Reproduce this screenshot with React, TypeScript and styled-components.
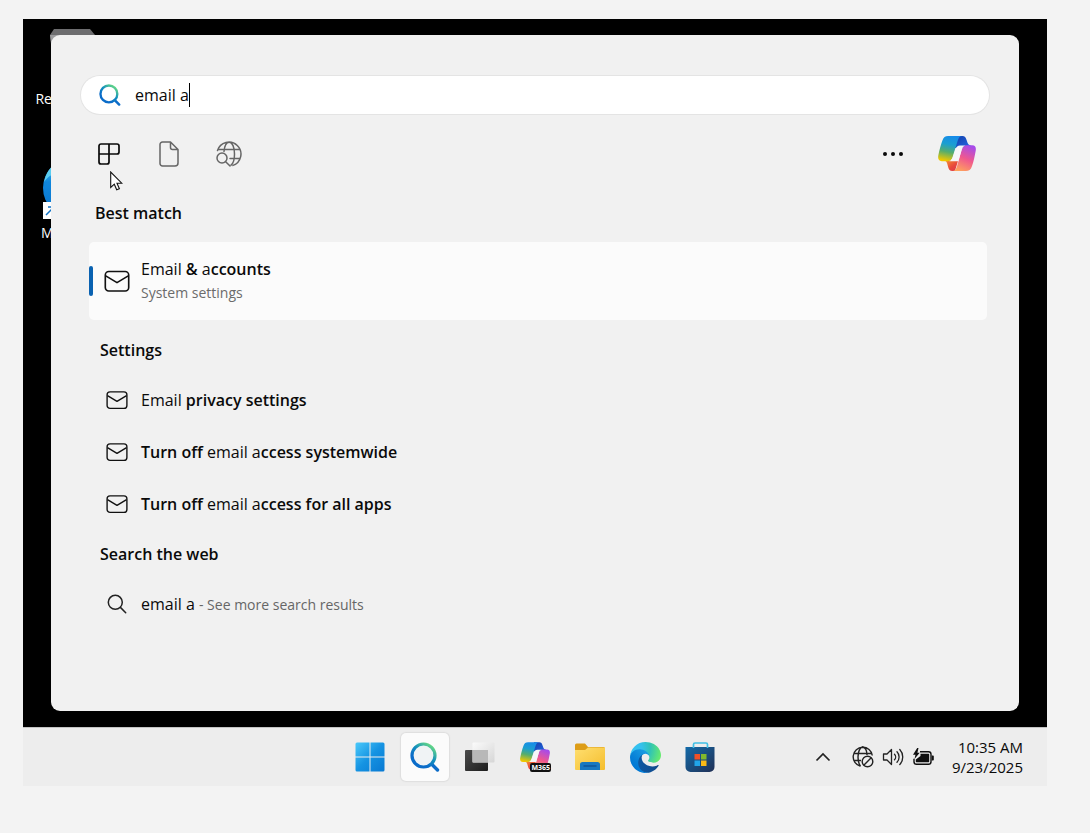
import React, { useState } from "react";
import styled, { createGlobalStyle } from "styled-components";

const GlobalStyle = createGlobalStyle`
  *, *::before, *::after { box-sizing: border-box; }
  body {
    margin: 0;
    background: #f3f3f3;
    color: #0a0a0a;
    font-family: "Open Sans", "Noto Sans", sans-serif;
    font-size: 16px;
    line-height: 24px;
  }
  button, input { font: inherit; color: inherit; }
  svg { display: block; flex: none; }
`;

const Screen = styled.div`
  margin: 19px 43px 47px 23px;
`;

const Desktop = styled.main`
  position: relative;
  overflow: hidden;
  padding: 16px 28px;
  background: #000;
`;

const Shortcut = styled.div<{ $top: number }>`
  position: absolute;
  left: 9px;
  top: ${(p) => p.$top}px;
  width: 80px;
  display: flex;
  flex-direction: column;
  align-items: center;
  gap: 4px;
  color: #fff;
  font-size: 14px;
  line-height: 20px;
  white-space: nowrap;
`;

const Panel = styled.section`
  position: relative;
  padding: 41px 30px 81px;
  border-radius: 9px;
  background: #f1f1f1;
`;

const SearchBox = styled.label`
  display: flex;
  align-items: center;
  height: 38px;
  padding-left: 18px;
  border-radius: 19px;
  background: #fff;
  box-shadow: 0 0 0 1px #e4e4e4;
  cursor: text;
`;

const SearchInput = styled.input`
  field-sizing: content;
  margin-left: 14px;
  padding: 0;
  border: 0;
  outline: 0;
  background: transparent;
  caret-color: transparent;
`;

const Caret = styled.span`
  width: 1px;
  height: 24px;
  background: #000;
`;

const Toolbar = styled.div`
  display: flex;
  align-items: center;
  height: 79px;
  padding: 0 12px 0 8px;
`;

const ToolButton = styled.button<{ $active?: boolean; $after?: number }>`
  display: grid;
  place-items: center;
  width: 40px;
  height: 40px;
  margin-right: ${(p) => p.$after ?? 20}px;
  padding: 0;
  border: 0;
  background: transparent;
  color: ${(p) => (p.$active ? "#0a0a0a" : "#666")};
`;

const Spacer = styled.div`
  flex: 1;
`;

const Heading = styled.h2<{ $inset: number; $before: number; $after: number }>`
  margin: ${(p) => p.$before}px 0 ${(p) => p.$after}px ${(p) => p.$inset}px;
  font-size: 16px;
  line-height: 24px;
  font-weight: 600;
`;

const BestMatch = styled.button`
  position: relative;
  display: flex;
  align-items: center;
  gap: 11px;
  width: calc(100% - 10px);
  height: 78px;
  margin-left: 8px;
  padding: 0 15px;
  border: 0;
  border-radius: 5px;
  background: #fbfbfb;
  text-align: left;

  &::before {
    content: "";
    position: absolute;
    left: 0;
    top: 24px;
    bottom: 24px;
    width: 4px;
    border-radius: 2px;
    background: #0a62b1;
  }
`;

const Subtitle = styled.div`
  color: #6b6b6b;
  font-size: 14px;
`;

const ResultList = styled.ul`
  margin: 0;
  padding: 0;
  list-style: none;
`;

const ResultRow = styled.button`
  display: flex;
  align-items: center;
  gap: 13px;
  width: 100%;
  height: 52px;
  padding: 0 25px;
  border: 0;
  background: transparent;
  text-align: left;

  small {
    color: #666;
    font-size: 14px;
  }
`;

const Completion = styled.b`
  font-weight: 600;
`;

const Pointer = styled.svg`
  position: absolute;
  left: 59px;
  top: 136px;
`;

const Taskbar = styled.footer`
  display: grid;
  grid-template-columns: 1fr auto 1fr;
  align-items: center;
  height: 59px;
  border-top: 1px solid #c4c4c4;
  background: #ededed;
`;

const Apps = styled.nav`
  grid-column: 2;
  display: flex;
  gap: 7px;
`;

const AppButton = styled.button<{ $active?: boolean }>`
  display: grid;
  place-items: center;
  width: 48px;
  height: 48px;
  padding: 0;
  border: 0;
  border-radius: 5px;
  background: ${(p) => (p.$active ? "#fbfbfb" : "transparent")};
  box-shadow: ${(p) => (p.$active ? "0 0 1px 1px #dedede" : "none")};
`;

const Tray = styled.div`
  display: flex;
  align-items: center;
  justify-content: flex-end;
  padding-right: 24px;
`;

const TrayButton = styled.button<{ $after?: number }>`
  display: grid;
  place-items: center;
  width: 24px;
  height: 32px;
  margin-right: ${(p) => p.$after ?? 6}px;
  padding: 0;
  border: 0;
  background: transparent;
`;

const Clock = styled.time`
  font-size: 15px;
  line-height: 20px;
  text-align: right;
`;

const MailIcon = ({ size }: { size: number }) => (
  <svg width={size} height={size} viewBox="0 0 24 24" fill="none" stroke="#111" strokeWidth="1.5" strokeLinejoin="round">
    <rect x="1.2" y="3.2" width="21.6" height="18" rx="3.2" />
    <path d="M1.6 7.300 12 13.500 22.4 7.300" />
  </svg>
);

const SearchGlyph = ({ size, id, fill = "none" }: { size: number; id: string; fill?: string }) => (
  <svg width={size} height={size} viewBox="0 0 30 30" fill="none">
    <defs>
      <linearGradient id={id} x1="5" y1="26" x2="22" y2="3" gradientUnits="userSpaceOnUse">
        <stop offset="0.3" stopColor="#0a6cc9" />
        <stop offset="0.6" stopColor="#138fbd" />
        <stop offset="1" stopColor="#69dc83" />
      </linearGradient>
    </defs>
    <path d="m21.5 22 6 6" stroke="#0c6cc8" strokeWidth="3.4" strokeLinecap="round" />
    <circle cx="13.5" cy="13.5" r="11.5" fill={fill} stroke={`url(#${id})`} strokeWidth="3.2" />
  </svg>
);

const AppsIcon = () => (
  <svg width="22" height="22" viewBox="0 0 22 22" fill="none" stroke="currentColor" strokeWidth="1.7" strokeLinejoin="round">
    <path d="M3 1h16a2 2 0 0 1 2 2v6a2 2 0 0 1-2 2h-8v8a2 2 0 0 1-2 2H3a2 2 0 0 1-2-2V3a2 2 0 0 1 2-2ZM1 11h10V1" />
  </svg>
);

const DocumentIcon = () => (
  <svg width="20" height="26" viewBox="0 0 20 26" fill="none" stroke="currentColor" strokeWidth="1.5" strokeLinejoin="round">
    <path d="M3.5 1h8L19 8.500V22a3 3 0 0 1-3 3H3.500a2.500 2.500 0 0 1-2.500-2.500v-19A2.500 2.500 0 0 1 3.500 1ZM11.500 1v5.500a2 2 0 0 0 2 2H19" />
  </svg>
);

const WebIcon = () => (
  <svg width="26" height="26" viewBox="0 0 26 26" fill="none" stroke="currentColor" strokeWidth="1.5" strokeLinecap="round">
    <path d="M1.500 9.500A12 12 0 1 1 17 24.400M2.200 8.500h21.600M14 17.500h10M8 10.500C8.500 5 10.500 1.200 13.200 1.200c3.200 0 5.300 5.300 5.300 11.800 0 5.500-1.200 9.500-3.500 11.200" />
    <circle cx="6" cy="17" r="5" />
    <path d="m9.700 20.700 4.300 4.300" />
  </svg>
);

const Copilot = ({ id, width, height }: { id: string; width: number; height: number }) => (
  <svg width={width} height={height} viewBox="0 0 112 103">
    <defs>
      <linearGradient id={`${id}l`} x1="0.6" y1="0" x2="0.4" y2="1">
        <stop offset="0" stopColor="#168bea" />
        <stop offset="0.35" stopColor="#1b9fd0" />
        <stop offset="0.65" stopColor="#56ad6d" />
        <stop offset="1" stopColor="#f1c800" />
      </linearGradient>
      <linearGradient id={`${id}r`} x1="0.7" y1="0" x2="0.3" y2="1">
        <stop offset="0" stopColor="#a64bea" />
        <stop offset="0.5" stopColor="#f0588e" />
        <stop offset="1" stopColor="#ffa35c" />
      </linearGradient>
      <linearGradient id={`${id}t`} x1="0" y1="0" x2="1" y2="1">
        <stop offset="0" stopColor="#143fa8" />
        <stop offset="1" stopColor="#2368e6" />
      </linearGradient>
      <linearGradient id={`${id}b`} x1="0" y1="0" x2="1" y2="1">
        <stop offset="0" stopColor="#f6a033" />
        <stop offset="0.6" stopColor="#e8483c" />
        <stop offset="1" stopColor="#d93854" />
      </linearGradient>
    </defs>
    <path d="M52 0h20c7 0 10 4 12 11l3 9c2 5 4 7 9 7v8H50Z" fill={`url(#${id}t)`} />
    <path d="M60 70 50 103H42c-7 0-10-4-12-11l-3-11c-2-6-4-8-10-8Z" fill={`url(#${id}b)`} />
    <path d="M30 0h42c-8 0-11 5-14 14L43 62c-3 9-7 12-15 12H11C2 74-1 67 1 57 4 41 8 27 13 13 16 4 21 0 30 0Z" fill={`url(#${id}l)`} />
    <path d="M82 103H42c8 0 11-5 14-14l14-49c3-9 6-13 14-13h17c9 0 12 7 10 17-3 16-6 31-11 45-3 10-9 14-18 14Z" fill={`url(#${id}r)`} />
    <path d="M65 28H81c-6 1-9 6-11 12L60 74H33c6-2 9-6 11-12l8-24c2-6 6-10 13-10Z" fill="#f6f6f8" />
  </svg>
);

const EdgeLogo = ({ size, id }: { size: number; id: string }) => (
  <svg width={size} height={size} viewBox="0 0 256 256">
    <defs>
      <linearGradient id={`${id}a`} x1="63" y1="177" x2="241" y2="177" gradientUnits="userSpaceOnUse">
        <stop stopColor="#0c59a4" />
        <stop offset="1" stopColor="#114a8b" />
      </linearGradient>
      <linearGradient id={`${id}b`} x1="157" y1="100" x2="46" y2="221" gradientUnits="userSpaceOnUse">
        <stop stopColor="#1b9de2" />
        <stop offset="0.16" stopColor="#1595df" />
        <stop offset="0.67" stopColor="#0680d7" />
        <stop offset="1" stopColor="#0078d4" />
      </linearGradient>
      <radialGradient id={`${id}c`} cx="30" cy="55" r="235" gradientUnits="userSpaceOnUse">
        <stop stopColor="#35c1f1" />
        <stop offset="0.3" stopColor="#34c1ed" />
        <stop offset="0.6" stopColor="#2fc2b8" />
        <stop offset="1" stopColor="#66eb6e" />
      </radialGradient>
    </defs>
    <g transform="translate(-4.630 -4.920)">
      <path fill={`url(#${id}a)`} d="M235.680 195.460a93.730 93.730 0 0 1-10.540 4.710 101.870 101.870 0 0 1-35.900 6.460c-47.320 0-88.540-32.550-88.540-74.320A31.480 31.480 0 0 1 117.130 105c-42.800 1.800-53.800 46.400-53.800 72.530 0 73.880 68.090 81.370 82.760 81.370 7.910 0 19.840-2.300 27-4.560l1.310-.44a128.340 128.340 0 0 0 66.600-52.800 4 4 0 0 0-5.320-5.640Z" />
      <path fill={`url(#${id}b)`} d="M110.340 246.340A79.200 79.200 0 0 1 87.600 225a80.720 80.720 0 0 1 29.530-120c3.120-1.470 8.450-4.130 15.540-4a32.350 32.350 0 0 1 25.690 13 31.880 31.880 0 0 1 6.360 18.660c0-.21 24.460-79.600-80-79.600-43.900 0-80 41.660-80 78.210a130.150 130.150 0 0 0 12.110 56 128 128 0 0 0 156.380 67.110 75.550 75.550 0 0 1-62.780-8Z" />
      <path fill={`url(#${id}c)`} d="M156.940 153.780c-.81 1.050-3.300 2.500-3.300 5.660 0 2.610 1.700 5.120 4.720 7.230 14.380 10 41.490 8.680 41.560 8.680a59.560 59.560 0 0 0 30.270-8.350 61.380 61.380 0 0 0 30.430-52.880c.26-22.410-8-37.310-11.340-43.910C228.090 28.760 182.350 4.920 132.610 4.920a128 128 0 0 0-128 126.200c.48-36.540 36.800-66.050 80-66.050 3.500 0 23.460.34 42 10.070 16.340 8.580 24.900 18.940 30.850 29.210 6.180 10.670 7.280 24.150 7.280 29.520s-2.740 13.330-7.800 19.910Z" />
    </g>
  </svg>
);

const RecycleBin = () => (
  <svg width="60" height="56" viewBox="0 0 60 56">
    <path d="M8 6 12 0h36l5 6-5 46H13Z" fill="#6d6d6f" />
    <path d="M8 6h45l-2 14H10Z" fill="#9b9b9d" />
  </svg>
);

const EdgeShortcut = () => (
  <svg width="60" height="62" viewBox="0 0 60 62">
    <defs>
      <linearGradient id="disc" x1="0" y1="0" x2="0" y2="1">
        <stop offset="0.1" stopColor="#42c4ee" />
        <stop offset="0.4" stopColor="#1087dd" />
        <stop offset="1" stopColor="#0870c8" />
      </linearGradient>
    </defs>
    <circle cx="31" cy="31" r="30" fill="url(#disc)" />
    <path d="M2 25C4 16 8 10 14 6L10 18C7 19 4 22 2 25Z" fill="#5bcdf0" />
    <path d="M1 45h17v17H1Z" fill="#fff" />
    <path d="m4 58 8-8M6 50h6v6" fill="none" stroke="#1273c4" strokeWidth="1.500" />
  </svg>
);

const WindowsLogo = () => (
  <svg width="30" height="30" viewBox="0 0 30 30">
    <defs>
      <linearGradient id="win" x1="0" y1="0" x2="30" y2="30" gradientUnits="userSpaceOnUse">
        <stop stopColor="#4ccbfb" />
        <stop offset="0.5" stopColor="#1593e2" />
        <stop offset="1" stopColor="#0878d2" />
      </linearGradient>
    </defs>
    <path fill="url(#win)" d="M2 .5h12.500v14H.5V2A1.500 1.500 0 0 1 2 .5Zm13.500 0H28A1.500 1.500 0 0 1 29.500 2v12.500h-14ZM.5 15.500h14v14H2A1.500 1.500 0 0 1 .5 28Zm15 0h14V28a1.500 1.500 0 0 1-1.500 1.500H15.500Z" />
  </svg>
);

const TaskView = () => (
  <svg width="30" height="30" viewBox="0 0 30 30">
    <defs>
      <linearGradient id="tvd" x1="0" y1="0" x2="1" y2="1">
        <stop stopColor="#4c4c4c" />
        <stop offset="1" stopColor="#1c1c1c" />
      </linearGradient>
      <linearGradient id="tvl" x1="0" y1="0" x2="1" y2="1">
        <stop stopColor="#fbfbfb" />
        <stop offset="1" stopColor="#d6d6d6" />
      </linearGradient>
    </defs>
    <rect x="0" y="8" width="23" height="21" rx="1" fill="url(#tvd)" />
    <rect x="7.500" y="0.500" width="22" height="20" rx="1" fill="url(#tvl)" />
    <rect x="7.500" y="8" width="15.500" height="12.500" fill="#b8b8b8" />
  </svg>
);

const FolderIcon = () => (
  <svg width="32" height="28" viewBox="0 0 32 28">
    <defs>
      <linearGradient id="fold" x1="0" y1="0" x2="1" y2="1">
        <stop stopColor="#ffdf70" />
        <stop offset="1" stopColor="#f4bd2d" />
      </linearGradient>
    </defs>
    <path d="M1 2a1.500 1.500 0 0 1 1.500-1.500H11L14 4h15.500A1.500 1.500 0 0 1 31 5.500V10H1Z" fill="#dd9d17" />
    <path d="M1 7h10l3-2.500h17V26a1 1 0 0 1-1 1H2a1 1 0 0 1-1-1Z" fill="url(#fold)" />
    <path d="M6 27v-5.500A2.500 2.500 0 0 1 8.500 19h15a2.500 2.500 0 0 1 2.500 2.500V27Z" fill="#1878c0" />
    <path d="M9.500 23h13" stroke="#0d4f91" strokeWidth="1.300" />
  </svg>
);

const StoreIcon = () => (
  <svg width="30" height="32" viewBox="0 0 30 32">
    <defs>
      <linearGradient id="store" x1="0" y1="0" x2="1" y2="1">
        <stop stopColor="#136aa8" />
        <stop offset="1" stopColor="#213055" />
      </linearGradient>
    </defs>
    <path d="M.5 6h29v20a5 5 0 0 1-5 5h-19a5 5 0 0 1-5-5Z" fill="url(#store)" />
    <path d="M8.500 7V3.500A1.500 1.500 0 0 1 10 2h11a1.500 1.500 0 0 1 1.500 1.500V7" fill="none" stroke="#40bfe5" strokeWidth="1.700" />
    <path d="M9.500 13H15v5.500H9.500Z" fill="#ee5028" />
    <path d="M16 13h5.500v5.500H16Z" fill="#82b92c" />
    <path d="M9.500 19.500H15V25H9.500Z" fill="#21a5e9" />
    <path d="M16 19.500h5.500V25H16Z" fill="#fbb916" />
  </svg>
);

const CopilotApp = styled.span`
  position: relative;
  display: block;
  padding-bottom: 2px;
`;

const Badge = styled.span`
  position: absolute;
  right: -1px;
  bottom: 0;
  padding: 0 1px;
  border-radius: 2px;
  background: #111;
  color: #fff;
  font-size: 7px;
  line-height: 9px;
  font-weight: 700;
`;

const ChevronIcon = () => (
  <svg width="16" height="10" viewBox="0 0 16 10" fill="none" stroke="#222" strokeWidth="1.700">
    <path d="m1.500 8.500 6.500-6.500 6.500 6.500" />
  </svg>
);

const OfflineIcon = () => (
  <svg width="22" height="22" viewBox="0 0 22 22" fill="none" stroke="#222" strokeWidth="1.400">
    <path d="M8.500 20.200A9.600 9.600 0 1 1 20.300 9.500M1.700 7.500h18M1.500 14.500H9M8.500 20C6.800 18 6 15 6 11c0-5.500 2-9.700 4.500-9.700S14.800 4 15 9" />
    <circle cx="15.500" cy="15.500" r="5.300" />
    <path d="m11.800 19.200 7.400-7.400" />
  </svg>
);

const SpeakerIcon = () => (
  <svg width="22" height="20" viewBox="0 0 22 20" fill="none" stroke="#222" strokeWidth="1.300" strokeLinejoin="round" strokeLinecap="round">
    <path d="M1.500 7H5l4.500-4.500v15L5 13H1.500Z" />
    <path d="M12.500 7.200a4 4 0 0 1 0 5.600M15 4.800a7.500 7.500 0 0 1 0 10.400M17.800 2.500a11 11 0 0 1 0 15" />
  </svg>
);

const BatteryIcon = () => (
  <svg width="22" height="18" viewBox="0 0 22 18">
    <path d="M8 3.700h8.500A2.500 2.500 0 0 1 19 6.200v7.600a2.500 2.500 0 0 1-2.500 2.500h-12A2.500 2.500 0 0 1 2 13.800v-3" fill="none" stroke="#111" strokeWidth="1.400" />
    <path d="M8.500 5.800h8a.7.7 0 0 1 .7.7v7a.7.7 0 0 1-.7.7H4.500a.7.7 0 0 1-.7-.7v-2L8.500 8ZM19.700 7.500H21a.8.8 0 0 1 .8.8v3.400a.8.8 0 0 1-.8.800h-1.300Z" fill="#111" />
    <path d="M5.200 0 1 6.800h2.500L2.500 11 7.700 4.700H5.400L6.500 0Z" fill="#111" />
  </svg>
);

const settingsResults = [
  { id: "privacy", parts: [["Email ", false], ["privacy settings", true]] },
  { id: "system", parts: [["Turn off ", true], ["email a", false], ["ccess systemwide", true]] },
  { id: "apps", parts: [["Turn off ", true], ["email a", false], ["ccess for all apps", true]] },
] as { id: string; parts: [string, boolean][] }[];

export default function App() {
  const [query, setQuery] = useState("email a");

  return (
    <>
      <GlobalStyle />
      <Screen>
        <Desktop>
          <Shortcut $top={10}>
            <RecycleBin />
            <span>Recycle Bin</span>
          </Shortcut>
          <Shortcut $top={138}>
            <EdgeShortcut />
            <span>Microsoft</span>
          </Shortcut>

          <Panel aria-label="Search">
            <SearchBox>
              <SearchGlyph size={22} id="searchField" />
              <SearchInput
                aria-label="Search"
                value={query}
                onChange={(e) => setQuery(e.target.value)}
              />
              <Caret />
            </SearchBox>

            <Toolbar>
              <ToolButton $active aria-label="All"><AppsIcon /></ToolButton>
              <ToolButton aria-label="Documents"><DocumentIcon /></ToolButton>
              <ToolButton aria-label="Web"><WebIcon /></ToolButton>
              <Spacer />
              <ToolButton $active $after={24} aria-label="More options">
                <svg width="22" height="6" viewBox="0 0 22 6" fill="currentColor">
                  <circle cx="3" cy="3" r="2" />
                  <circle cx="11" cy="3" r="2" />
                  <circle cx="19" cy="3" r="2" />
                </svg>
              </ToolButton>
              <ToolButton $after={0} aria-label="Copilot">
                <Copilot id="cp" width={38} height={35} />
              </ToolButton>
            </Toolbar>

            <Heading $inset={14} $before={8} $after={17}>Best match</Heading>
            <BestMatch>
              <MailIcon size={26} />
              <div>
                <div>Email <Completion>&amp; </Completion>a<Completion>ccounts</Completion></div>
                <Subtitle>System settings</Subtitle>
              </div>
            </BestMatch>

            <Heading $inset={19} $before={18} $after={12}>Settings</Heading>
            <ResultList>
              {settingsResults.map((result) => (
                <li key={result.id}>
                  <ResultRow>
                    <MailIcon size={22} />
                    <span>
                      {result.parts.map(([text, bold]) =>
                        bold ? <Completion key={text}>{text}</Completion> : text
                      )}
                    </span>
                  </ResultRow>
                </li>
              ))}
            </ResultList>

            <Heading $inset={19} $before={12} $after={12}>Search the web</Heading>
            <ResultList>
              <li>
                <ResultRow>
                  <svg width="22" height="22" viewBox="0 0 22 22" fill="none" stroke="#222" strokeWidth="1.500" strokeLinecap="round">
                    <circle cx="9.300" cy="9.300" r="7" />
                    <path d="m14.400 14.400 5.300 5.300" />
                  </svg>
                  <span>email a <small>- See more search results</small></span>
                </ResultRow>
              </li>
            </ResultList>

            <Pointer width="13" height="20" viewBox="0 0 13 20" fill="#fff" stroke="#111" strokeWidth="1.100" aria-hidden>
              <path d="M.7 1v15.500l3.600-3.300 2.400 5.600 2.700-1.100L7 12.200h4.800Z" />
            </Pointer>
          </Panel>
        </Desktop>

        <Taskbar>
          <Apps aria-label="Taskbar">
            <AppButton aria-label="Start"><WindowsLogo /></AppButton>
            <AppButton $active aria-label="Search"><SearchGlyph size={30} id="searchApp" fill="#f0f3f5" /></AppButton>
            <AppButton aria-label="Task view"><TaskView /></AppButton>
            <AppButton aria-label="Microsoft 365 Copilot">
              <CopilotApp>
                <Copilot id="m365" width={30} height={28} />
                <Badge>M365</Badge>
              </CopilotApp>
            </AppButton>
            <AppButton aria-label="File Explorer"><FolderIcon /></AppButton>
            <AppButton aria-label="Microsoft Edge"><EdgeLogo size={31} id="edge" /></AppButton>
            <AppButton aria-label="Microsoft Store"><StoreIcon /></AppButton>
          </Apps>
          <Tray>
            <TrayButton $after={16} aria-label="Show hidden icons"><ChevronIcon /></TrayButton>
            <TrayButton aria-label="Network"><OfflineIcon /></TrayButton>
            <TrayButton aria-label="Volume"><SpeakerIcon /></TrayButton>
            <TrayButton $after={17} aria-label="Battery"><BatteryIcon /></TrayButton>
            <Clock>10:35 AM<br />9/23/2025</Clock>
          </Tray>
        </Taskbar>
      </Screen>
    </>
  );
}
